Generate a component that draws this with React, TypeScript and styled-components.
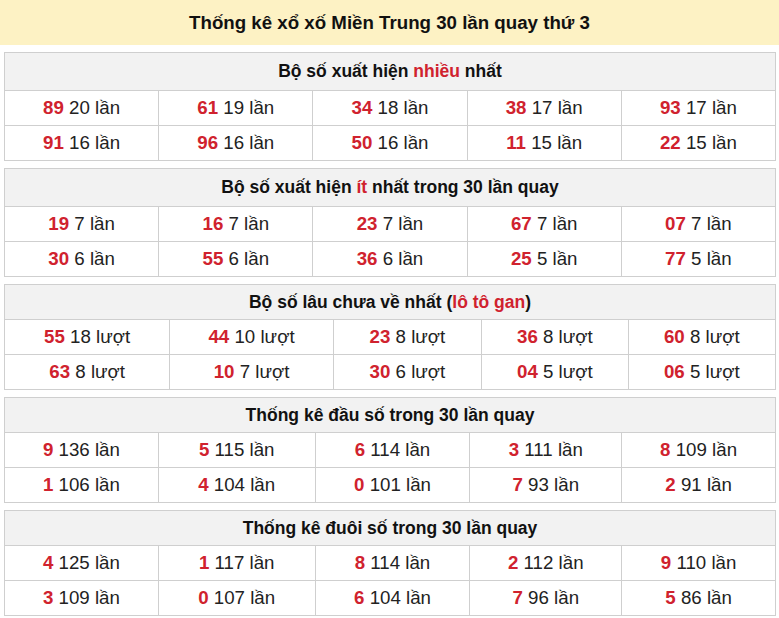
import styled, { createGlobalStyle } from 'styled-components';

const GlobalStyle = createGlobalStyle`
  body {
    margin: 0;
    background: #ffffff;
    font-family: 'Liberation Sans', Arial, sans-serif;
    color: #222222;
  }
`;

type Cell = { num: string; count: string };

type Section = {
  title: React.ReactNode;
  unit: string;
  columns?: string;
  titleHeight: number;
  rowHeight: number;
  rows: Cell[][];
};

const Page = styled.div`
  display: flex;
  flex-direction: column;
  width: 779px;
`;

const Header = styled.h1`
  margin: 0;
  height: 45px;
  display: flex;
  align-items: center;
  justify-content: center;
  background-color: #fdf2c4;
  font-size: 18.7px;
  font-weight: 700;
  color: #111111;
`;

const Sections = styled.div`
  display: flex;
  flex-direction: column;
  gap: 7px;
  padding: 7px 3px 0 4px;
`;

const Table = styled.div<{ columns: string }>`
  display: grid;
  grid-template-columns: ${(props) => props.columns};
  gap: 1px;
  padding: 1px;
  background-color: #cfcfcf;
`;

const TitleCell = styled.div<{ h: number }>`
  grid-column: 1 / -1;
  height: ${(props) => props.h}px;
  display: flex;
  align-items: center;
  justify-content: center;
  background-color: #f2f2f2;
  font-size: 17.5px;
  font-weight: 700;
  color: #111111;
`;

const DataCell = styled.div<{ h: number }>`
  height: ${(props) => props.h}px;
  display: flex;
  align-items: center;
  justify-content: center;
  background-color: #ffffff;
  font-size: 18.7px;
  color: #222222;
  white-space: pre;
`;

const Num = styled.b`
  color: #d0222e;
  font-weight: 700;
`;

const Red = styled.span`
  color: #d0222e;
`;

const c = (s: string): Cell[] =>
  s.split(',').map((p) => {
    const [num, count] = p.trim().split(' ');
    return { num, count };
  });

const sections: Section[] = [
  {
    title: (
      <span>
        Bộ số xuất hiện <Red>nhiều</Red> nhất
      </span>
    ),
    unit: 'lần',
    titleHeight: 37,
    rowHeight: 34,
    rows: [c('89 20, 61 19, 34 18, 38 17, 93 17'), c('91 16, 96 16, 50 16, 11 15, 22 15')],
  },
  {
    title: (
      <span>
        Bộ số xuất hiện <Red>ít</Red> nhất trong 30 lần quay
      </span>
    ),
    unit: 'lần',
    titleHeight: 37,
    rowHeight: 34,
    rows: [c('19 7, 16 7, 23 7, 67 7, 07 7'), c('30 6, 55 6, 36 6, 25 5, 77 5')],
  },
  {
    title: (
      <span>
        Bộ số lâu chưa về nhất (<Red>lô tô gan</Red>)
      </span>
    ),
    unit: 'lượt',
    columns: '165fr 163fr 148fr 146fr 147fr',
    titleHeight: 34,
    rowHeight: 34,
    rows: [c('55 18, 44 10, 23 8, 36 8, 60 8'), c('63 8, 10 7, 30 6, 04 5, 06 5')],
  },
  {
    title: 'Thống kê đầu số trong 30 lần quay',
    unit: 'lần',
    columns: '153fr 156fr 154fr 151fr 153fr',
    titleHeight: 34,
    rowHeight: 34,
    rows: [c('9 136, 5 115, 6 114, 3 111, 8 109'), c('1 106, 4 104, 0 101, 7 93, 2 91')],
  },
  {
    title: 'Thống kê đuôi số trong 30 lần quay',
    unit: 'lần',
    columns: '153fr 156fr 154fr 151fr 153fr',
    titleHeight: 34,
    rowHeight: 34,
    rows: [c('4 125, 1 117, 8 114, 2 112, 9 110'), c('3 109, 0 107, 6 104, 7 96, 5 86')],
  },
];

function App() {
  return (
    <>
      <GlobalStyle />
      <Page>
        <Header>Thống kê xổ xố Miền Trung 30 lần quay thứ 3</Header>
        <Sections>
          {sections.map((section, i) => (
            <Table key={i} columns={section.columns ?? 'repeat(5, 1fr)'}>
              <TitleCell h={section.titleHeight}>{section.title}</TitleCell>
              {section.rows.flat().map((cell, j) => (
                <DataCell key={j} h={section.rowHeight}>
                  <span>
                    <Num>{cell.num}</Num> {cell.count} {section.unit}
                  </span>
                </DataCell>
              ))}
            </Table>
          ))}
        </Sections>
      </Page>
    </>
  );
}

export default App;
